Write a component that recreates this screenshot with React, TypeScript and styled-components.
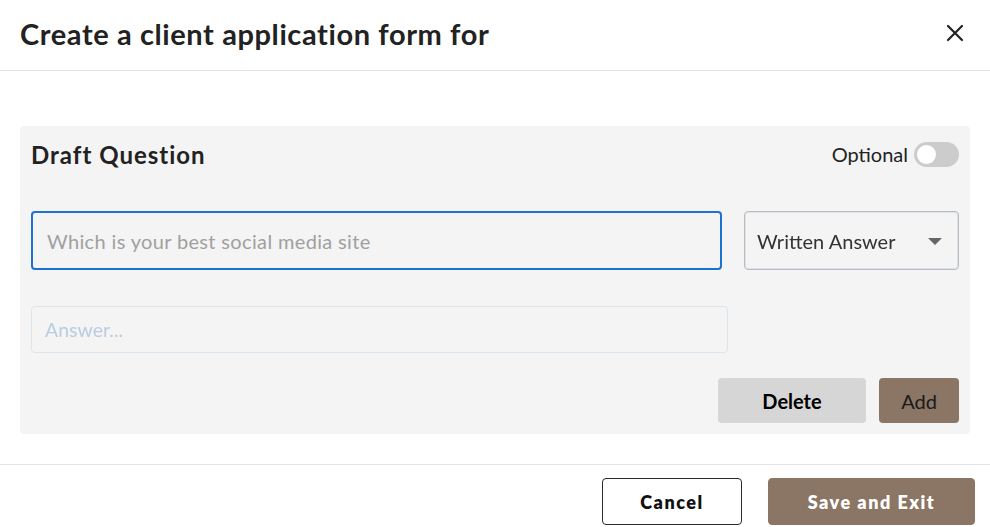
import React from 'react';
import styled, { createGlobalStyle } from 'styled-components';

const GlobalStyle = createGlobalStyle`
  html, body {
    margin: 0;
    padding: 0;
    background: #ffffff;
    font-family: Lato, "Noto Sans", sans-serif;
    color: #222;
  }
  * { box-sizing: border-box; }
`;

const Modal = styled.div`
  width: 990px;
  height: 527px;
  background: #fff;
  display: flex;
  flex-direction: column;
  overflow: hidden;
`;

const Header = styled.div`
  flex-shrink: 0;
  height: 71px;
  display: flex;
  align-items: center;
  justify-content: space-between;
  padding: 0 26px 4px 20px;
  border-bottom: 1px solid #e4e4e4;
`;

const Title = styled.h1`
  margin: 0;
  font-size: 29px;
  font-weight: 700;
  color: #222;
  letter-spacing: 0.6px;
`;

const CloseButton = styled.button`
  border: none;
  background: none;
  padding: 0;
  width: 18px;
  height: 18px;
  cursor: pointer;
  display: flex;
`;

const Body = styled.div`
  flex-shrink: 0;
  padding: 55px 20px 30px 20px;
`;

const Panel = styled.div`
  background: #f4f4f4;
  border-radius: 4px;
  padding: 12px 11px 11px 11px;
  display: flex;
  flex-direction: column;
`;

const PanelHeader = styled.div`
  display: flex;
  align-items: center;
  justify-content: space-between;
  height: 32px;
`;

const PanelTitle = styled.h2`
  margin: 0;
  font-size: 24px;
  font-weight: 700;
  letter-spacing: 1px;
  color: #222;
`;

const OptionalWrap = styled.label`
  display: flex;
  align-items: center;
  gap: 6px;
  font-size: 20px;
  color: #222;
`;

const Track = styled.span<{ on?: boolean }>`
  width: 45px;
  height: 25px;
  border-radius: 13px;
  background: ${p => (p.on ? '#8b7565' : '#cccccc')};
  position: relative;
  display: inline-block;
`;

const Knob = styled.span<{ on?: boolean }>`
  position: absolute;
  top: 3px;
  left: ${p => (p.on ? '23px' : '3px')};
  width: 19px;
  height: 19px;
  border-radius: 50%;
  background: #fff;
`;

const QuestionRow = styled.div`
  display: flex;
  gap: 22px;
  margin-top: 41px;
`;

const QuestionInput = styled.input`
  flex: 0 0 691px;
  height: 59px;
  border: 2px solid #1b72d0;
  border-radius: 4px;
  background: #f4f4f4;
  padding: 0 14px;
  font-family: Lato, "Noto Sans", sans-serif;
  font-size: 20px;
  letter-spacing: 0.35px;
  color: #222;
  outline: none;
  &::placeholder { color: #a0a0a0; }
`;

const SelectBox = styled.div`
  flex: 1;
  height: 59px;
  border: 1px solid #b7bcc2;
  border-radius: 4px;
  box-shadow: inset 0 0 0 1px #dfe3e7;
  display: flex;
  align-items: center;
  justify-content: space-between;
  padding: 0 16px 0 12px;
  font-size: 20px;
  color: #333;
`;

const Caret = styled.span`
  width: 0;
  height: 0;
  border-left: 7px solid transparent;
  border-right: 7px solid transparent;
  border-top: 7px solid #666;
  margin-top: 2px;
`;

const AnswerInput = styled.input`
  width: 697px;
  height: 47px;
  margin-top: 36px;
  border: 1px solid #dbe5ee;
  border-radius: 4px;
  background: #f4f4f4;
  padding: 0 13px;
  font-family: Lato, "Noto Sans", sans-serif;
  font-size: 19.5px;
  outline: none;
  &::placeholder { color: #b9cde0; }
`;

const ActionRow = styled.div`
  display: flex;
  justify-content: flex-end;
  gap: 13px;
  margin-top: 25px;
`;

const PanelButton = styled.button<{ variant?: 'grey' | 'brown' }>`
  height: 45px;
  border: none;
  border-radius: 4px;
  font-family: Lato, "Noto Sans", sans-serif;
  font-size: 20px;
  cursor: pointer;
  ${({ variant = 'grey' }) =>
    variant === 'grey'
      ? `
          width: 148px;
          background: #d6d6d6;
          color: #000;
          font-weight: 700;
        `
      : `
          width: 80px;
          background: #8b7565;
          color: #1a1a1a;
          font-weight: 400;
        `}
`;

const Footer = styled.div`
  flex-shrink: 0;
  border-top: 1px solid #e4e4e4;
  height: 63px;
  display: flex;
  justify-content: flex-end;
  align-items: flex-start;
  gap: 26px;
  padding: 13px 15px 0 0;
`;

const FooterButton = styled.button<{ primary?: boolean }>`
  height: 47px;
  border-radius: 4px;
  font-family: Lato, "Noto Sans", sans-serif;
  font-size: 18px;
  font-weight: 800;
  letter-spacing: 1.5px;
  cursor: pointer;
  ${({ primary }) =>
    primary
      ? `
          width: 207px;
          background: #8b7565;
          border: 1px solid #8b7565;
          color: #fff;
        `
      : `
          width: 140px;
          background: #fff;
          border: 1px solid #2a2a2a;
          color: #111;
        `}
`;

export default function App() {
  const [optional, setOptional] = React.useState(false);

  return (
    <>
      <GlobalStyle />
      <Modal>
        <Header>
          <Title>Create a client application form for</Title>
          <CloseButton aria-label="Close">
            <svg width="18" height="18" viewBox="0 0 18 18">
              <path d="M2 2 L16 16 M16 2 L2 16" stroke="#222" strokeWidth="2.2" strokeLinecap="round" />
            </svg>
          </CloseButton>
        </Header>
        <Body>
          <Panel>
            <PanelHeader>
              <PanelTitle>Draft Question</PanelTitle>
              <OptionalWrap onClick={() => setOptional(o => !o)}>
                Optional
                <Track on={optional}>
                  <Knob on={optional} />
                </Track>
              </OptionalWrap>
            </PanelHeader>
            <QuestionRow>
              <QuestionInput autoFocus placeholder="Which is your best social media site" />
              <SelectBox>
                Written Answer
                <Caret />
              </SelectBox>
            </QuestionRow>
            <AnswerInput placeholder="Answer..." />
            <ActionRow>
              <PanelButton variant="grey">Delete</PanelButton>
              <PanelButton variant="brown">Add</PanelButton>
            </ActionRow>
          </Panel>
        </Body>
        <Footer>
          <FooterButton>Cancel</FooterButton>
          <FooterButton primary>Save and Exit</FooterButton>
        </Footer>
      </Modal>
    </>
  );
}
